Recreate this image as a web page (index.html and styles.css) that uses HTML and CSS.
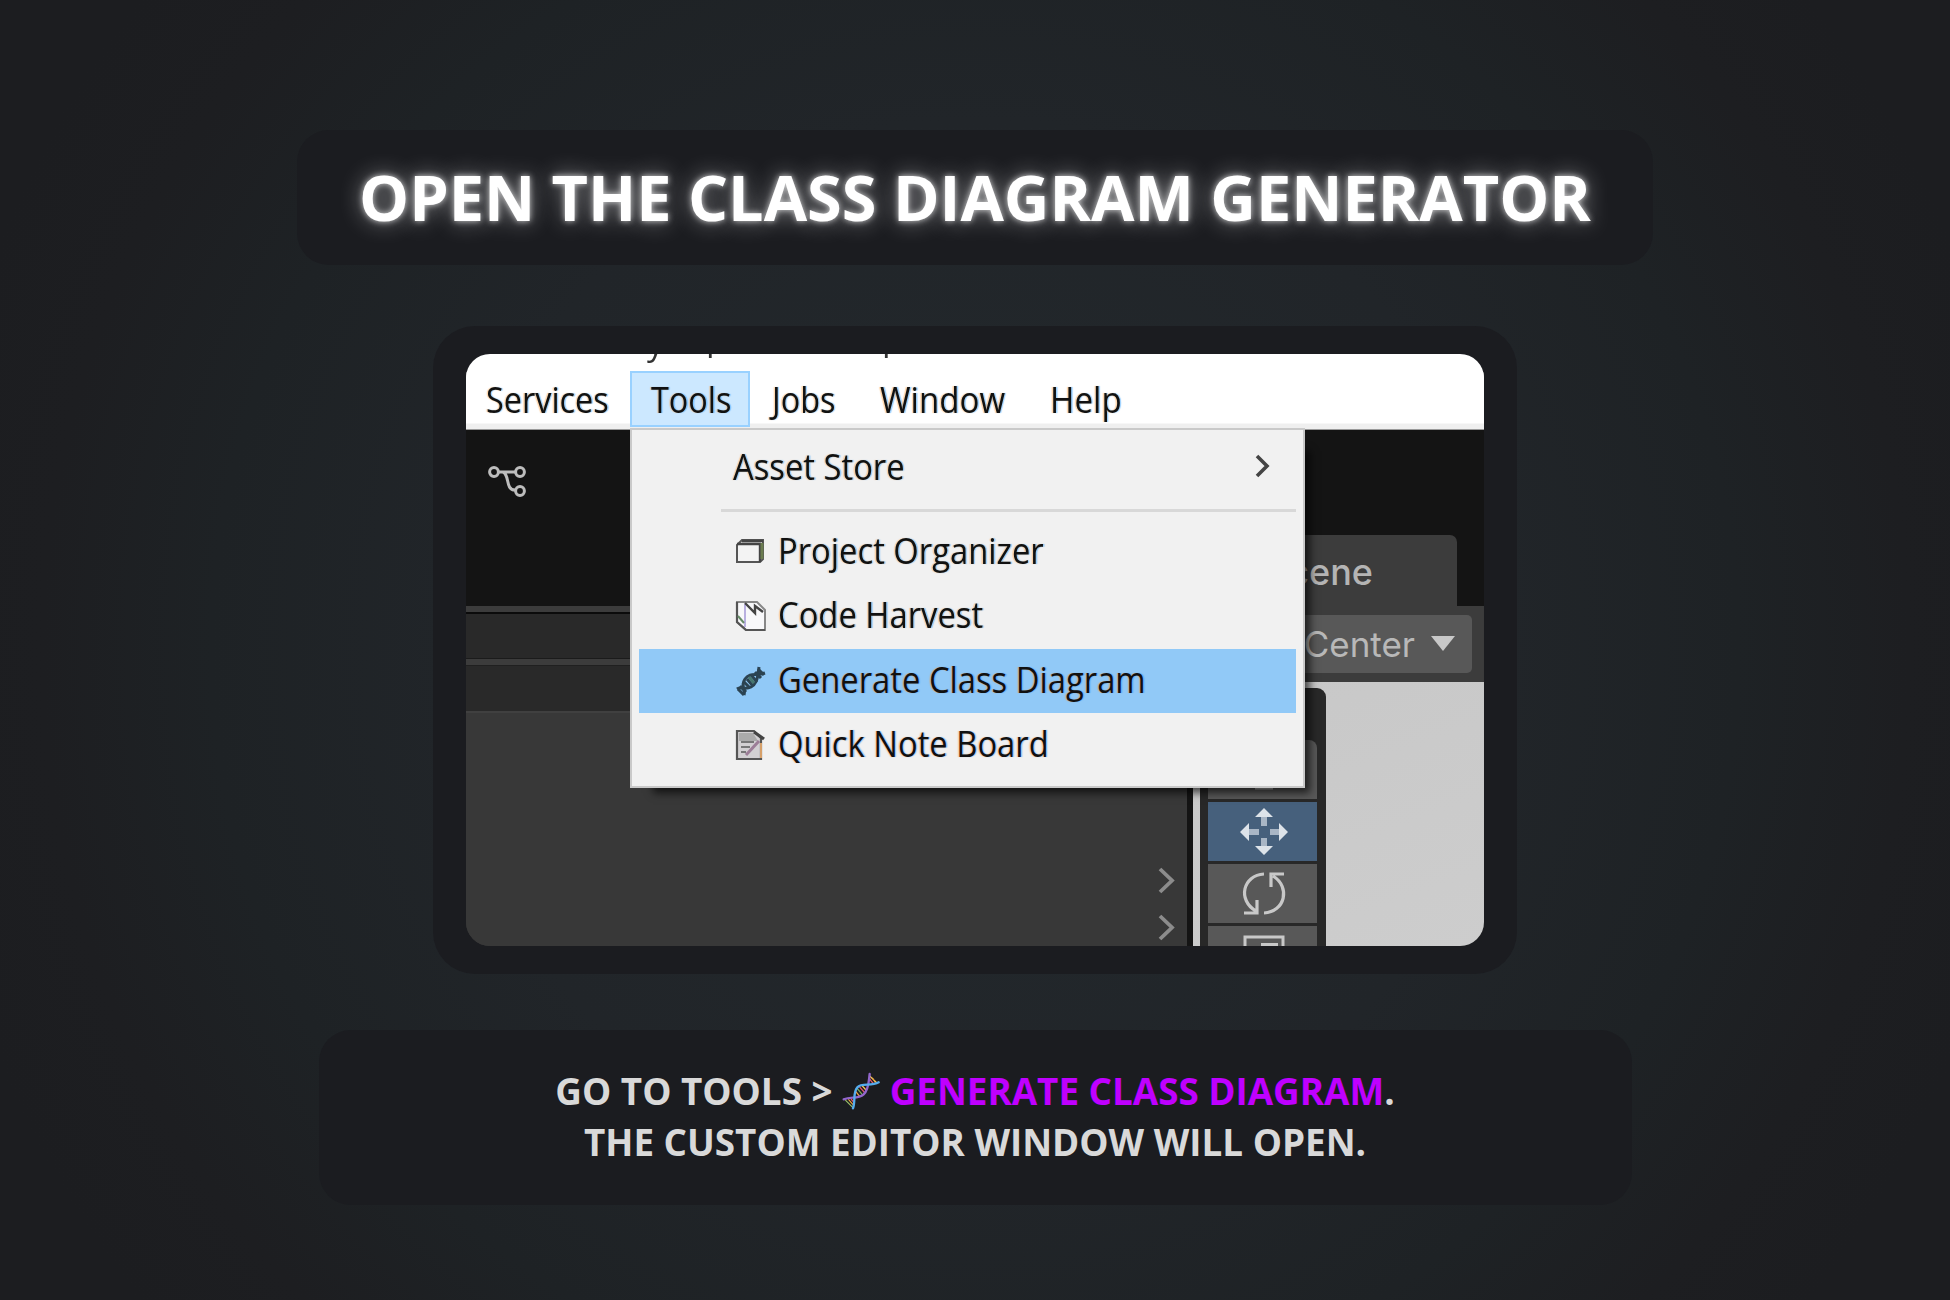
FILE: index.html
```html
<!DOCTYPE html>
<html lang="en">
<head>
<meta charset="utf-8">
<title>Open the Class Diagram Generator</title>
<link rel="stylesheet" href="styles.css">
</head>
<body>
<main class="slide">
  <h1 class="title"><span>OPEN THE CLASS DIAGRAM GENERATOR</span></h1>

  <section class="frame">
    <div class="shot">
      <div class="editor">
        <div class="titlebar"><span class="tb-y">y</span><span class="tb-p">p</span><span class="tb-q">p</span></div>
        <nav class="menubar">
          <span class="entry services"><b class="label">Services</b></span>
          <span class="entry tools"><b class="label">Tools</b></span>
          <span class="entry jobs"><b class="label">Jobs</b></span>
          <span class="entry window"><b class="label">Window</b></span>
          <span class="entry help"><b class="label">Help</b></span>
        </nav>
        <div class="tabstrip">
          <svg class="graph" width="44" height="38" viewBox="0 0 44 38" fill="none" stroke="#bdbdbd" stroke-width="3"><circle cx="8" cy="9" r="4.4"/><circle cx="34" cy="9" r="4.4"/><circle cx="34" cy="28" r="4.4"/><path d="M13 9H29M17 9C24 12 19 27 29 27"/></svg>
          <div class="tab">Scene</div>
        </div>
        <div class="panes">
          <div class="left">
            <div class="bar one"></div>
            <div class="bar two"></div>
            <div class="list">
              <svg width="18" height="27" viewBox="0 0 18 27"><path d="M2 2L14 13.5L2 25" fill="none" stroke="#8c8c8c" stroke-width="3.8"/></svg>
              <svg width="18" height="27" viewBox="0 0 18 27"><path d="M2 2L14 13.5L2 25" fill="none" stroke="#8c8c8c" stroke-width="3.8"/></svg>
            </div>
          </div>
          <div class="right">
            <div class="toolbar"><div class="pivot">Center<svg width="26" height="16" viewBox="0 0 26 16"><path d="M1 0H25L13 15Z" fill="#c8c8c8"/></svg></div></div>
            <div class="view">
              <div class="tools-panel">
                <div class="tool"><svg width="50" height="59" viewBox="0 0 50 59"><path d="M17 48H35" stroke="#b0b0b0" stroke-width="3"/></svg></div>
                <div class="tool active"><svg width="50" height="59" viewBox="0 0 50 59"><path d="M26 12V24M26 36V47M10 30H21M32 30H43" stroke="#a9b6c5" stroke-width="6"/><path d="M26 6L35 15H17ZM26 53L35 44H17ZM2 30L11 21V39ZM50 30L41 21V39Z" fill="#dde3e9"/></svg></div>
                <div class="tool"><svg width="50" height="59" viewBox="0 0 50 59" fill="none" stroke="#c8c8c8" stroke-width="3.2"><path d="M26 10C5 11-1 36 18 47M6 49H19V36M26 49C47 48 53 23 35 12M46 10H33V23"/></svg></div>
                <div class="tool"><svg width="50" height="59" viewBox="0 0 50 59"><path d="M7 59V11H45V59" fill="none" stroke="#c8c8c8" stroke-width="3"/><path d="M23 19H38V34" fill="none" stroke="#c8c8c8" stroke-width="4"/></svg></div>
              </div>
            </div>
          </div>
        </div>

        <div class="menu">
          <div class="item store"><b class="label">Asset Store</b>
            <svg class="arrow" width="18" height="24" viewBox="0 0 18 24"><path d="M2 2L12 12L2 22" fill="none" stroke="#444" stroke-width="3.6"/></svg></div>
          <div class="rule"></div>
          <div class="item">
            <svg class="ico" width="34" height="34" viewBox="0 0 34 34"><path d="M3 10L8 5H29V24L26 27H3Z" fill="#f3f3f3" stroke="#555" stroke-width="2"/><path d="M3 9H26V27M8 6H29" fill="none" stroke="#444" stroke-width="2.4"/><path d="M28 8V24" stroke="#6b7c50" stroke-width="3"/></svg>
            <b class="label">Project Organizer</b></div>
          <div class="item">
            <svg class="ico" width="34" height="34" viewBox="0 0 34 34"><path d="M3 3H23L31 11V31H12L3 23Z" fill="#f8f8fa" stroke="#888" stroke-width="2"/><path d="M3 3V23L12 31H31" fill="none" stroke="#555" stroke-width="2.2"/><path d="M11 5V28" stroke="#b9b0e0" stroke-width="2"/><path d="M11 4L21 14V7L29 13" fill="none" stroke="#444" stroke-width="2.4"/><path d="M4 17L10 24" stroke="#668b68" stroke-width="2"/></svg>
            <b class="label">Code Harvest</b></div>
          <div class="item selected">
            <svg class="ico" width="34" height="34" viewBox="0 0 34 34" fill="none" stroke="#2b4352" stroke-width="3"><path d="M25 3C24 12 23 20 17 23S7 22 3 25M31 9C22 12 16 8 11 15S12 25 10 31"/><path d="M24 5L30 11M21 8L27 14M17 11L23 18M13 15L19 22M10 18L16 24M6 22L12 28M4 25L10 31"/><path d="M15 13L20 19" stroke="#47766f"/></svg>
            <b class="label">Generate Class Diagram</b></div>
          <div class="item">
            <svg class="ico" width="34" height="34" viewBox="0 0 34 34"><path d="M3 3H20L27 10V31H3Z" fill="#d2d0d2" stroke="#555" stroke-width="2.2"/><path d="M5 5H19L24 13H5Z" fill="#aaa"/><path d="M7 14H20M7 19H16M7 24H12" stroke="#777" stroke-width="2"/><path d="M12 27L25 13" stroke="#9c7e97" stroke-width="3"/><path d="M20 4L30 11" stroke="#444" stroke-width="3.2"/><path d="M27 15V30" stroke="#d6a06a" stroke-width="2"/></svg>
            <b class="label">Quick Note Board</b></div>
        </div>
      </div>
    </div>
  </section>

  <section class="caption">
    <p class="line first">GO TO TOOLS &gt;
      <svg class="dna" width="38" height="38" viewBox="66 72 114 114" fill="none" stroke-linecap="round"><path d="M149 84L171 105" stroke="#fdcb58" stroke-width="3.5"/><path d="M158 90L167 106" stroke="#f4a03a" stroke-width="3"/><path d="M147 91L160 107" stroke="#ea596e" stroke-width="4"/><path d="M126 113L138 126" stroke="#fdcb58" stroke-width="4"/><path d="M118 116L134 134" stroke="#ea596e" stroke-width="4"/><path d="M112 122L127 140" stroke="#78b159" stroke-width="4"/><path d="M107 130L119 145" stroke="#f4a03a" stroke-width="4"/><path d="M94 154L102 163" stroke="#ea596e" stroke-width="4"/><path d="M86 155L101 172" stroke="#f4a03a" stroke-width="3.5"/><path d="M77 157L98 178" stroke="#9bc46b" stroke-width="3.5"/><path d="M149 78C146 98 147 124 131 139C114 154 94 145 71 154" stroke="#9266cc" stroke-width="7"/><path d="M176 103C154 117 126 103 112 118C98 133 107 159 99 181" stroke="#55acee" stroke-width="7"/></svg>
      <em>GENERATE CLASS DIAGRAM</em>.</p>
    <p class="line second">THE CUSTOM EDITOR WINDOW WILL OPEN.</p>
  </section>
</main>
</body>
</html>
```
FILE: styles.css
```css
* { box-sizing: border-box; }

body {
  margin: 0;
  font-family: "Open Sans", "Noto Sans", sans-serif;
  background: #1c1d20;
}

.slide {
  height: 1300px;
  padding-top: 130px;
  display: flex;
  flex-direction: column;
  align-items: center;
  background: radial-gradient(ellipse 1060px 1060px at 50% 50%, #23292d 0%, #212529 50%, #1e2225 72%, #1d1e21 88%, #1c1d20 100%);
}

.title {
  width: 1356px;
  height: 135px;
  margin: 0;
  padding-bottom: 3px;
  display: flex;
  justify-content: center;
  align-items: center;
  border-radius: 32px;
  background: #1b1c20;
  color: #fff;
  font-size: 63px;
  font-weight: 700;
  line-height: 1;
  white-space: nowrap;
  text-shadow: 0 0 6px rgba(255, 255, 255, .75), 0 0 22px rgba(255, 255, 255, .5);
}

.frame {
  width: 1084px;
  height: 648px;
  margin-top: 61px;
  padding: 28px 33px;
  border-radius: 42px;
  background: #1b1c20;
}

.shot {
  height: 592px;
  overflow: hidden;
  border-radius: 24px;
  background: linear-gradient(#fff 76px, #383838 76px);
}

.editor {
  position: relative;
  height: 592px;
  filter: blur(.7px);
}

.label {
  display: inline-block;
  flex: none;
  font-weight: 440;
  transform: scaleX(.9);
  transform-origin: 0 50%;
  white-space: nowrap;
  text-shadow: -1.5px 0 1px rgba(255, 150, 40, .4), 1.5px 0 1px rgba(30, 150, 255, .45);
}

.titlebar {
  display: flex;
  height: 17px;
  padding-left: 181px;
  overflow: hidden;
  color: #333;
  font-size: 34px;
  line-height: 17px;
}
.titlebar span { margin-top: -20px; }
.titlebar .tb-p, .titlebar .tb-q { margin-top: -25px; }
.titlebar .tb-y { width: 59px; }
.titlebar .tb-p { width: 176px; }

.menubar {
  display: flex;
  height: 59px;
  background: linear-gradient(#fff 52px, #efefef 53px);
  border-bottom: 1px solid #999;
  color: #111;
  font-size: 36px;
  line-height: 57px;
}
.entry { flex: none; height: 56px; }
.services { width: 164px; padding-left: 20px; }
.tools { width: 120px; padding-left: 19px; line-height: 53px; border: 2px solid #99d1ff; background: #cce8ff; }
.jobs { width: 125px; padding-left: 22px; }
.window { width: 166px; padding-left: 5px; }
.help { padding-left: 9px; }
.window .label, .help .label { transform: scaleX(.92); }

.tabstrip {
  display: flex;
  justify-content: space-between;
  height: 176px;
  padding: 0 27px 0 20px;
  background: #141414;
}
.graph { margin-top: 33px; }
.tab {
  align-self: flex-end;
  width: 240px;
  height: 71px;
  padding-right: 84px;
  border-radius: 7px 7px 0 0;
  background: #3c3c3c;
  color: #b4b4b4;
  font: 500 36px/74px Inter, sans-serif;
  text-align: right;
}

.panes { display: flex; height: 340px; }
.left {
  width: 727px;
  border-right: 6px solid #141414;
  background: #383838;
}
.bar { background: #292929; border-top: 6px solid #3c3c3c; }
.bar.one { height: 53px; box-shadow: inset 0 2px 0 #0b0b0b, inset 0 -1px 0 #1b1b1b; }
.bar.two { height: 52px; box-shadow: inset 0 1px 0 #202020; }
.list {
  display: flex;
  flex-direction: column;
  align-items: flex-end;
  gap: 20px;
  height: 235px;
  padding: 154px 11px 0 0;
  border-top: 2px solid #404040;
}

.right { width: 291px; }
.toolbar {
  display: flex;
  height: 76px;
  padding: 9px 12px 9px 0;
  background: #3c3c3c;
}
.pivot {
  display: flex;
  flex: 1;
  justify-content: flex-end;
  align-items: center;
  gap: 15px;
  padding-right: 16px;
  border-radius: 5px;
  background: #585858;
  color: #b8b8b8;
  font: 400 35px/60px Inter, sans-serif;
}
.view {
  height: 264px;
  padding: 6px 0 0 7px;
  background: linear-gradient(160deg, #c8c8c8, #cdcdcd);
}
.tools-panel {
  display: flex;
  flex-direction: column;
  gap: 3px;
  width: 126px;
  height: 258px;
  padding: 52px 9px 0 8px;
  overflow: hidden;
  border-radius: 0 9px 0 0;
  background: #282828;
}
.tool {
  display: flex;
  flex: none;
  justify-content: center;
  height: 59px;
  background: #585858;
}
.tool:first-child { border-radius: 8px 8px 0 0; }
.tool.active { background: #46607c; }

/* Drop-down that covers the editor panes */
.menu {
  position: absolute;
  left: 164px;
  top: 74px;
  width: 675px;
  height: 360px;
  padding: 6px 7px 0;
  border: 2px solid #c9c9c9;
  background: #f1f1f1;
  box-shadow: 14px 14px 8px -9px rgba(0, 0, 0, .65);
  color: #111;
  font-size: 36px;
}
.item {
  display: flex;
  align-items: center;
  height: 64.5px;
  padding: 0 23px 0 94px;
}
.item .label { line-height: 64px; margin-top: -2px; transform: scaleX(.91); }
.ico { flex: none; margin: 0 10px 0 1px; }
.item.selected { background: #91c9f7; }
.item.store { justify-content: space-between; }
.item.store .label { margin-top: -3px; }
.arrow { margin-top: -4px; }
.rule { height: 3px; margin: 8px 0 8px 82px; background: #d8d8d8; }

.caption {
  width: 1313px;
  height: 175px;
  margin-top: 56px;
  padding-top: 36px;
  border-radius: 32px;
  background: #1b1c20;
  color: #d9d9d9;
  font-size: 36.8px;
  font-weight: 700;
  text-align: center;
}
.line { height: 51px; margin: 0; line-height: 51px; white-space: nowrap; }
.line em { color: #bf00ff; font-style: normal; }
.dna { vertical-align: -5px; }
```
